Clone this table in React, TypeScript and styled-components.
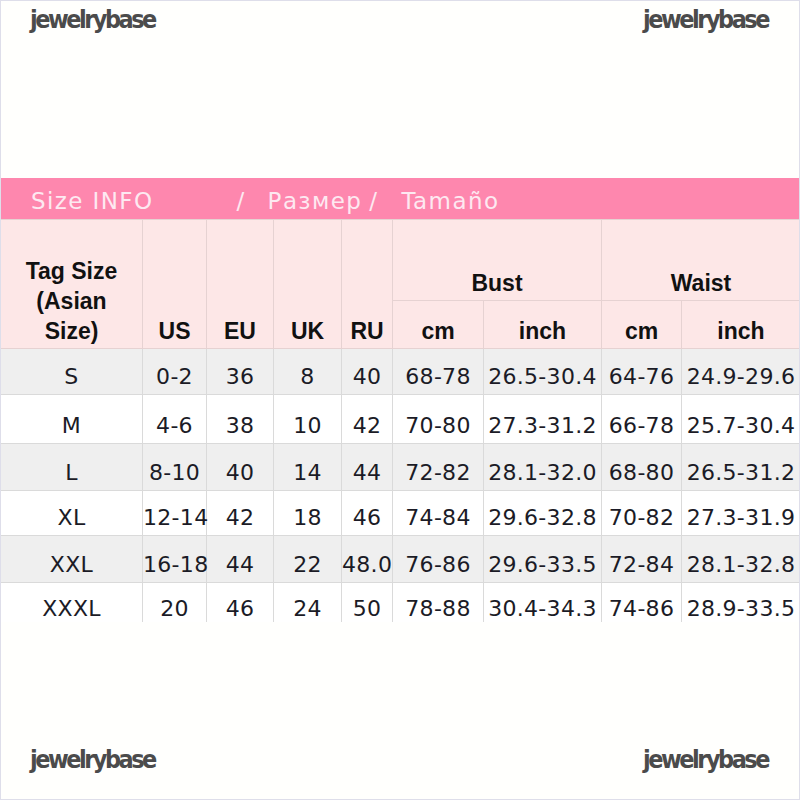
import React from "react";
import styled, { createGlobalStyle } from "styled-components";

const GlobalStyle = createGlobalStyle`
  html, body { margin: 0; padding: 0; background: #ffffff; }
  #root { width: 800px; height: 800px; }
`;

const Page = styled.div`
  width: 800px;
  height: 800px;
  box-sizing: border-box;
  border: 1px solid #dedeea;
  background: #fffffd;
  display: grid;
  grid-template-rows: 177px 444px 1fr;
  overflow: hidden;
`;

const MarkRow = styled.div<{ $bottom?: boolean }>`
  display: flex;
  justify-content: space-between;
  align-items: ${(p) => (p.$bottom ? "flex-end" : "flex-start")};
  padding: ${(p) => (p.$bottom ? "0 31px 27px 29px" : "6px 31px 0 29px")};
`;

const Mark = styled.span`
  font-family: "DejaVu Sans Condensed", "DejaVu Sans", sans-serif;
  font-stretch: condensed;
  font-weight: 700;
  font-size: 25px;
  line-height: 25px;
  letter-spacing: -2.5px;
  color: #4b4b4b;
`;

const TableBox = styled.div`
  overflow: hidden;
  margin: 0 -1px;
`;

const Table = styled.table`
  width: 800px;
  table-layout: fixed;
  border-collapse: collapse;
  font-family: "DejaVu Sans", Verdana, sans-serif;
`;

const Caption = styled.caption`
  background: #fe87ae;
  height: 41px;
  color: #fde9f1;
  font-family: "DejaVu Sans", Verdana, sans-serif;
  font-size: 23px;
  letter-spacing: 1.4px;
  text-align: left;
  white-space: nowrap;
`;

const CaptionInner = styled.div`
  display: flex;
  align-items: center;
  height: 41px;
  padding-top: 5px;
  box-sizing: border-box;
`;

const Word = styled.span<{ $x: number }>`
  margin-left: ${(p) => p.$x}px;
`;

const Col = styled.col<{ $w: number }>`
  width: ${(p) => p.$w}px;
`;

const HeadCell = styled.th<{ $h?: number }>`
  background: #fde7e7;
  border: 1px solid #e6d2d2;
  height: ${(p) => (p.$h ? `${p.$h}px` : "auto")};
  padding: 0 0 2px 0;
  vertical-align: bottom;
  text-align: center;
  font-family: "Liberation Sans", Arial, sans-serif;
  font-weight: 700;
  font-size: 23px;
  line-height: 30px;
  color: #111111;
  white-space: nowrap;
`;

const DataRow = styled.tr<{ $shade: boolean; $h: number }>`
  height: ${(p) => p.$h}px;
  background: ${(p) => (p.$shade ? "#efefef" : "#ffffff")};
`;

const DataCell = styled.td`
  border: 1px solid #dadada;
  padding: 0 0 4px 0;
  vertical-align: bottom;
  text-align: center;
  font-size: 22px;
  line-height: 26px;
  letter-spacing: 0.3px;
  color: #1b1b26;
  white-space: nowrap;
`;

const widths = [142, 64, 67, 68, 51, 91, 118, 80, 119];

const rows: string[][] = [
  ["S", "0-2", "36", "8", "40", "68-78", "26.5-30.4", "64-76", "24.9-29.6"],
  ["M", "4-6", "38", "10", "42", "70-80", "27.3-31.2", "66-78", "25.7-30.4"],
  ["L", "8-10", "40", "14", "44", "72-82", "28.1-32.0", "68-80", "26.5-31.2"],
  ["XL", "12-14", "42", "18", "46", "74-84", "29.6-32.8", "70-82", "27.3-31.9"],
  ["XXL", "16-18", "44", "22", "48.0", "76-86", "29.6-33.5", "72-84", "28.1-32.8"],
  ["XXXL", "20", "46", "24", "50", "78-88", "30.4-34.3", "74-86", "28.9-33.5"],
];

const rowHeights = [46, 49, 47, 45, 47, 44];

export default function App() {
  return (
    <>
      <GlobalStyle />
      <Page>
        <MarkRow>
          <Mark>jewelrybase</Mark>
          <Mark>jewelrybase</Mark>
        </MarkRow>
        <TableBox>
          <Table>
            <Caption>
              <CaptionInner>
                <Word $x={31}>Size INFO</Word>
                <Word $x={83}>/</Word>
                <Word $x={22}>Размер</Word>
                <Word $x={7}>/</Word>
                <Word $x={23}>Tamaño</Word>
              </CaptionInner>
            </Caption>
            <colgroup>
              {widths.map((w, i) => (
                <Col key={i} $w={w} />
              ))}
            </colgroup>
            <thead>
              <tr>
                <HeadCell rowSpan={2}>
                  Tag Size
                  <br />
                  (Asian
                  <br />
                  Size)
                </HeadCell>
                <HeadCell rowSpan={2}>US</HeadCell>
                <HeadCell rowSpan={2}>EU</HeadCell>
                <HeadCell rowSpan={2}>UK</HeadCell>
                <HeadCell rowSpan={2}>RU</HeadCell>
                <HeadCell colSpan={2} $h={78}>
                  Bust
                </HeadCell>
                <HeadCell colSpan={2} $h={78}>
                  Waist
                </HeadCell>
              </tr>
              <tr>
                <HeadCell $h={45}>cm</HeadCell>
                <HeadCell $h={45}>inch</HeadCell>
                <HeadCell $h={45}>cm</HeadCell>
                <HeadCell $h={45}>inch</HeadCell>
              </tr>
            </thead>
            <tbody>
              {rows.map((r, i) => (
                <DataRow key={r[0]} $shade={i % 2 === 0} $h={rowHeights[i]}>
                  {r.map((c, j) => (
                    <DataCell key={j}>{c}</DataCell>
                  ))}
                </DataRow>
              ))}
            </tbody>
          </Table>
        </TableBox>
        <MarkRow $bottom>
          <Mark>jewelrybase</Mark>
          <Mark>jewelrybase</Mark>
        </MarkRow>
      </Page>
    </>
  );
}
